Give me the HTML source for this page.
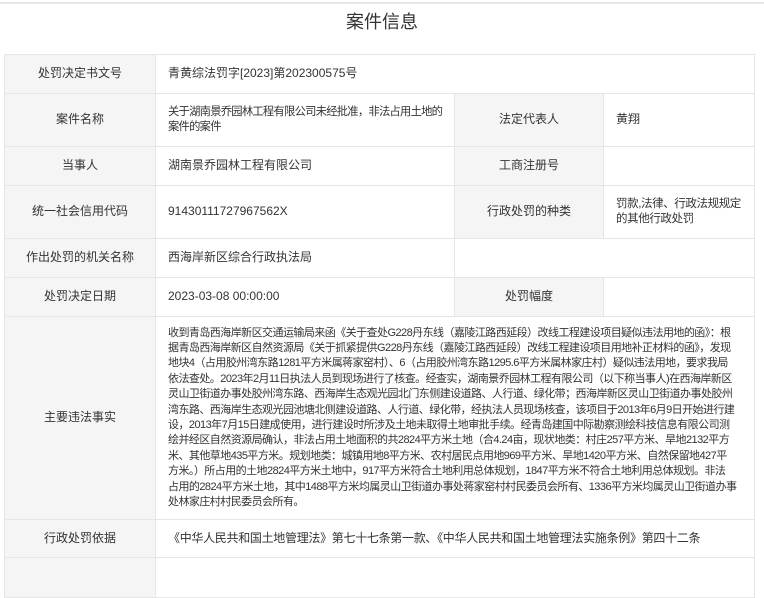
<!DOCTYPE html>
<html><head><meta charset="utf-8"><style>
*{margin:0;padding:0;box-sizing:border-box}
body{width:764px;height:568px;overflow:hidden;background:#fff;font-family:"Liberation Sans","Noto Sans CJK SC",sans-serif;color:#333;font-size:12px;position:relative}
.topline{position:absolute;left:0;top:2px;width:764px;height:2px;background:#e6e6e6}
h1{position:absolute;top:10px;left:0;width:764px;text-align:center;font-size:18px;font-weight:normal;color:#333;line-height:24px}
table{position:absolute;left:4px;top:54px;border-collapse:collapse;table-layout:fixed;width:750px}
td{border:1px solid #e6e6e6;vertical-align:middle;padding:0 12px;line-height:15.4px;white-space:nowrap;overflow:hidden}
td.l{background:#f5f5f5;text-align:center;padding:0}
.sm{letter-spacing:-0.4px;font-size:11.5px}
</style></head><body>
<div class="topline"></div>
<h1>案件信息</h1>
<table>
<colgroup><col style="width:151px"><col style="width:299px"><col style="width:149px"><col style="width:151px"></colgroup>
<tr style="height:39px"><td class="l">处罚决定书文号</td><td colspan="3">青黄综法罚字[2023]第202300575号</td></tr>
<tr style="height:53px"><td class="l">案件名称</td><td style="letter-spacing:-0.75px;font-size:11.3px">关于湖南景乔园林工程有限公司未经批准，非法占用土地的<br>案件的案件</td><td class="l">法定代表人</td><td>黄翔</td></tr>
<tr style="height:39px"><td class="l">当事人</td><td>湖南景乔园林工程有限公司</td><td class="l">工商注册号</td><td></td></tr>
<tr style="height:53px"><td class="l">统一社会信用代码</td><td>91430111727967562X</td><td class="l">行政处罚的种类</td><td class="sm">罚款,法律、行政法规规定<br>的其他行政处罚</td></tr>
<tr style="height:39px"><td class="l">作出处罚的机关名称</td><td>西海岸新区综合行政执法局</td><td colspan="2"></td></tr>
<tr style="height:39px"><td class="l">处罚决定日期</td><td>2023-03-08 00:00:00</td><td class="l">处罚幅度</td><td></td></tr>
<tr style="height:203px"><td class="l">主要违法事实</td><td colspan="3" style="letter-spacing:-0.55px;font-size:11px">收到青岛西海岸新区交通运输局来函《关于查处G228丹东线（嘉陵江路西延段）改线工程建设项目疑似违法用地的函》：根<br>据青岛西海岸新区自然资源局《关于抓紧提供G228丹东线（嘉陵江路西延段）改线工程建设项目用地补正材料的函》，发现<br>地块4（占用胶州湾东路1281平方米属蒋家窑村）、6（占用胶州湾东路1295.6平方米属林家庄村）疑似违法用地，要求我局<br>依法查处。2023年2月11日执法人员到现场进行了核查。经查实，湖南景乔园林工程有限公司（以下称当事人)在西海岸新区<br>灵山卫街道办事处胶州湾东路、西海岸生态观光园北门东侧建设道路、人行道、绿化带；西海岸新区灵山卫街道办事处胶州<br>湾东路、西海岸生态观光园池塘北侧建设道路、人行道、绿化带，经执法人员现场核查，该项目于2013年6月9日开始进行建<br>设，2013年7月15日建成使用，进行建设时所涉及土地未取得土地审批手续。经青岛建国中际勘察测绘科技信息有限公司测<br>绘并经区自然资源局确认，非法占用土地面积的共2824平方米土地（合4.24亩，现状地类：村庄257平方米、旱地2132平方<br>米、其他草地435平方米。规划地类：城镇用地8平方米、农村居民点用地969平方米、旱地1420平方米、自然保留地427平<br>方米。）所占用的土地2824平方米土地中，917平方米符合土地利用总体规划，1847平方米不符合土地利用总体规划。非法<br>占用的2824平方米土地，其中1488平方米均属灵山卫街道办事处蒋家窑村村民委员会所有、1336平方米均属灵山卫街道办事<br>处林家庄村村民委员会所有。</td></tr>
<tr style="height:38px"><td class="l">行政处罚依据</td><td colspan="3" style="letter-spacing:-0.3px">《中华人民共和国土地管理法》第七十七条第一款、《中华人民共和国土地管理法实施条例》第四十二条</td></tr>
<tr style="height:40px"><td class="l"></td><td colspan="3"></td></tr>
</table>
</body></html>
